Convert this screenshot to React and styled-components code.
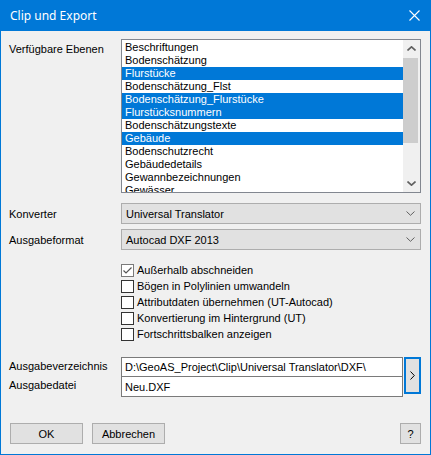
import styled, { createGlobalStyle } from 'styled-components';

const GlobalStyle = createGlobalStyle`
  html, body {
    margin: 0;
    padding: 0;
    background: #f0f0f0;
  }
  body {
    font-family: "Liberation Sans", Arial, sans-serif;
    font-size: 11px;
    color: #000;
  }
`;

const Window = styled.div`
  width: 431px;
  height: 455px;
  display: flex;
  flex-direction: column;
  background: #f0f0f0;
`;

const TitleBar = styled.div`
  height: 31px;
  flex: none;
  background: #0078d7;
  color: #fff;
  display: flex;
  align-items: center;
  justify-content: space-between;
  padding: 0 11px 0 10px;
  font-family: "Noto Sans", "Liberation Sans", sans-serif;
  font-size: 12px;
`;

const Body = styled.div`
  flex: 1;
  border: 1px solid #0078d7;
  border-top: 0;
  padding: 8px 9px 0 8px;
  display: flex;
  flex-direction: column;
`;

const Row = styled.div`
  display: grid;
  grid-template-columns: 112px 300px;
  align-items: ${({ $align }) => $align || 'center'};
  margin-top: ${({ $mt }) => $mt || 0}px;
`;

const Label = styled.div`
  padding-top: ${({ $pt }) => $pt || 0}px;
  height: ${({ $h }) => ($h ? `${$h}px` : 'auto')};
  line-height: ${({ $h }) => ($h ? `${$h}px` : 'normal')};
  white-space: nowrap;
`;

/* Listbox */
const ListBox = styled.div`
  height: 154px;
  box-sizing: border-box;
  border: 1px solid #828790;
  background: #fff;
  display: flex;
`;

const Items = styled.ul`
  flex: 1;
  margin: 0;
  padding: 1px 0 0;
  list-style: none;
  overflow: hidden;
`;

const Item = styled.li`
  height: 13px;
  line-height: 13px;
  padding-left: 3px;
  white-space: nowrap;
  background: ${({ $selected }) => ($selected ? '#0078d7' : 'transparent')};
  color: ${({ $selected }) => ($selected ? '#fff' : '#000')};
`;

const ScrollBar = styled.div`
  width: 17px;
  flex: none;
  background: #f0f0f0;
  display: flex;
  flex-direction: column;
`;

const ScrollArrow = styled.div`
  height: 17px;
  flex: none;
  display: flex;
  align-items: center;
  justify-content: center;
`;

const Thumb = styled.div`
  height: 85px;
  flex: none;
  margin: 1px 2px 0 0;
  background: #cdcdcd;
`;

const Track = styled.div`
  flex: 1;
`;

/* Combo box */
const Combo = styled.div`
  height: 21px;
  box-sizing: border-box;
  border: 1px solid #adadad;
  background: #e1e1e1;
  display: flex;
  align-items: center;
  justify-content: space-between;
  padding: 0 5px 0 4px;
`;

/* Checkboxes */
const CheckList = styled.div`
  display: flex;
  flex-direction: column;
`;

const CheckRow = styled.label`
  height: 16px;
  display: flex;
  align-items: center;
  gap: 3px;
`;

const Box = styled.span`
  width: 13px;
  height: 13px;
  box-sizing: border-box;
  border: 1px solid ${({ $checked }) => ($checked ? '#7a7a7a' : '#333')};
  background: #fff;
  display: flex;
  align-items: center;
  justify-content: center;
`;

/* Text inputs */
const PathGroup = styled.div`
  display: flex;
  gap: 1px;
  align-items: flex-start;
`;

const Inputs = styled.div`
  width: 282px;
  display: flex;
  flex-direction: column;
`;

const TextBox = styled.div`
  height: ${({ $h }) => $h}px;
  box-sizing: border-box;
  border: 1px solid #7a7a7a;
  background: #fff;
  padding-left: 3px;
  display: flex;
  align-items: center;
  white-space: nowrap;
  overflow: hidden;
  & + & {
    margin-top: -1px;
  }
`;

const BrowseButton = styled.button`
  width: 17px;
  height: 37px;
  box-sizing: border-box;
  border: 2px solid #0078d7;
  background: #e1e1e1;
  padding: 0;
  display: flex;
  align-items: center;
  justify-content: center;
`;

/* Footer */
const Footer = styled.div`
  margin-top: 26px;
  padding-left: 1px;
  display: flex;
  justify-content: space-between;
`;

const ButtonGroup = styled.div`
  display: flex;
  gap: 9px;
`;

const Button = styled.button`
  width: ${({ $w }) => $w}px;
  height: 21px;
  box-sizing: border-box;
  border: 1px solid #adadad;
  background: #e1e1e1;
  font-family: "Liberation Sans", Arial, sans-serif;
  font-size: 11px;
  color: #000;
  padding: 0;
`;

const Chevron = ({ up }) => (
  <svg width="9" height="5" viewBox="0 0 9 5">
    <polyline
      points={up ? '0.5,4.5 4.5,0.8 8.5,4.5' : '0.5,0.5 4.5,4.2 8.5,0.5'}
      fill="none"
      stroke={up ? '#606060' : '#606060'}
      strokeWidth={up ? 1.6 : 1.6}
    />
  </svg>
);

const ComboArrow = () => (
  <svg width="9" height="5" viewBox="0 0 9 5">
    <polyline points="0.5,0.5 4.5,4.3 8.5,0.5" fill="none" stroke="#606060" strokeWidth="1" />
  </svg>
);

const layers = [
  ['Beschriftungen', false],
  ['Bodenschätzung', false],
  ['Flurstücke', true],
  ['Bodenschätzung_Flst', false],
  ['Bodenschätzung_Flurstücke', true],
  ['Flurstücksnummern', true],
  ['Bodenschätzungstexte', false],
  ['Gebäude', true],
  ['Bodenschutzrecht', false],
  ['Gebäudedetails', false],
  ['Gewannbezeichnungen', false],
  ['Gewässer', false],
];

const options = [
  ['Außerhalb abschneiden', true],
  ['Bögen in Polylinien umwandeln', false],
  ['Attributdaten übernehmen (UT-Autocad)', false],
  ['Konvertierung im Hintergrund (UT)', false],
  ['Fortschrittsbalken anzeigen', false],
];

export default function App() {
  return (
    <>
      <GlobalStyle />
      <Window>
        <TitleBar>
          <span>Clip und Export</span>
          <svg width="11" height="11" viewBox="0 0 11 11">
            <path d="M0.5 0.5 L10.5 10.5 M10.5 0.5 L0.5 10.5" stroke="#fff" strokeWidth="1.1" />
          </svg>
        </TitleBar>
        <Body>
          <Row $align="start">
            <Label $pt={4}>Verfügbare Ebenen</Label>
            <ListBox>
              <Items>
                {layers.map(([name, sel]) => (
                  <Item key={name} $selected={sel}>{name}</Item>
                ))}
              </Items>
              <ScrollBar>
                <ScrollArrow><Chevron up /></ScrollArrow>
                <Thumb />
                <Track />
                <ScrollArrow><Chevron /></ScrollArrow>
              </ScrollBar>
            </ListBox>
          </Row>

          <Row $mt={10}>
            <Label>Konverter</Label>
            <Combo>
              <span>Universal Translator</span>
              <ComboArrow />
            </Combo>
          </Row>
          <Row $mt={5}>
            <Label>Ausgabeformat</Label>
            <Combo>
              <span>Autocad DXF 2013</span>
              <ComboArrow />
            </Combo>
          </Row>

          <Row $mt={12}>
            <span />
            <CheckList>
              {options.map(([text, checked]) => (
                <CheckRow key={text}>
                  <Box $checked={checked}>
                    {checked && (
                      <svg width="11" height="11" viewBox="0 0 11 11">
                        <polyline points="1.5,5.5 4,8 9.5,2.5" fill="none" stroke="#555" strokeWidth="1.2" />
                      </svg>
                    )}
                  </Box>
                  <span>{text}</span>
                </CheckRow>
              ))}
            </CheckList>
          </Row>

          <Row $mt={15} $align="start">
            <div>
              <Label $h={19}>Ausgabeverzeichnis</Label>
              <Label $h={19}>Ausgabedatei</Label>
            </div>
            <PathGroup>
              <Inputs>
                <TextBox $h={20}>D:\GeoAS_Project\Clip\Universal Translator\DXF\</TextBox>
                <TextBox $h={21}>Neu.DXF</TextBox>
              </Inputs>
              <BrowseButton>
                <svg width="5" height="9" viewBox="0 0 5 9">
                  <polyline points="0.5,0.5 4.3,4.5 0.5,8.5" fill="none" stroke="#000" strokeWidth="1" />
                </svg>
              </BrowseButton>
            </PathGroup>
          </Row>

          <Footer>
            <ButtonGroup>
              <Button $w={73}>OK</Button>
              <Button $w={73}>Abbrechen</Button>
            </ButtonGroup>
            <Button $w={21}>?</Button>
          </Footer>
        </Body>
      </Window>
    </>
  );
}
